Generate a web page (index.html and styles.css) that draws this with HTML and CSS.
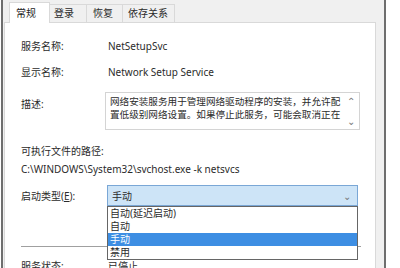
FILE: index.html
```html
<!DOCTYPE html>
<html lang="zh-cn">
<head>
    <meta charset="UTF-8">
    <title>NetSetupSvc 的属性</title>
    <link rel="stylesheet" href="styles.css">
</head>
<body>
    <div class="window">
        <!-- 选项卡 -->
        <div class="tabs">
            <div class="tab active">常规</div>
            <div class="tab">登录</div>
            <div class="tab">恢复</div>
            <div class="tab">依存关系</div>
        </div>

        <!-- 常规页 -->
        <div class="panel">
            <div class="row row-name">
                <div class="label">服务名称:</div>
                <div class="value">NetSetupSvc</div>
            </div>
            <div class="row row-display">
                <div class="label">显示名称:</div>
                <div class="value">Network Setup Service</div>
            </div>
            <div class="row row-desc">
                <div class="label">描述:</div>
                <div class="desc-box">
                    <div class="desc-text">网络安装服务用于管理网络驱动程序的安装，并允许配<br>置低级别网络设置。如果停止此服务，可能会取消正在</div>
                    <div class="desc-scroll">
                        <span class="chev">&#8963;</span>
                        <span class="chev">&#8964;</span>
                    </div>
                </div>
            </div>
            <div class="path-label">可执行文件的路径:</div>
            <div class="path-value">C:\WINDOWS\System32\svchost.exe -k netsvcs</div>
            <div class="row row-start">
                <div class="label">启动类型(<u>E</u>):</div>
                <div class="select">
                    <div class="select-box">
                        <span>手动</span>
                        <span class="select-arrow">&#8964;</span>
                    </div>
                    <ul class="options">
                        <li>自动(延迟启动)</li>
                        <li>自动</li>
                        <li class="selected">手动</li>
                        <li>禁用</li>
                    </ul>
                </div>
            </div>
            <div class="separator"></div>
            <div class="row row-status">
                <div class="label">服务状态:</div>
                <div class="value">已停止</div>
            </div>
        </div>
    </div>
</body>
</html>
```

FILE: styles.css
```css
body {
    margin: 0;
    background-color: #ffffff;
    font-family: "Noto Sans", "Noto Sans CJK SC", sans-serif;
    font-size: 10px;
    color: #2b2b2b;
    overflow: hidden;
}

.window {
    margin-left: 1px;
    width: 385px;
    height: 268px;
    overflow: hidden;
    box-sizing: border-box;
    border-left: 2px solid #6e6e6e;
    border-right: 2px solid #6e6e6e;
    background-color: #f0f0f0;
}

.tabs {
    display: flex;
    align-items: flex-end;
    height: 22px;
    padding-left: 6px;
    position: relative;
    z-index: 1;
}

.tab {
    height: 18px;
    box-sizing: border-box;
    line-height: 17px;
    padding: 0;
    white-space: nowrap;
    border: 1px solid #d9d9d9;
    border-bottom: none;
    border-left: none;
    background-color: #f0f0f0;
}

.tab:nth-child(2) {
    width: 37px;
    padding-left: 4px;
}

.tab:nth-child(3) {
    width: 36px;
    padding-left: 6px;
}

.tab:nth-child(4) {
    width: 52px;
    padding-left: 5px;
}

.tab.active {
    width: 41px;
    height: 21px;
    margin-bottom: -1px;
    line-height: 20px;
    padding-left: 6px;
    border-left: 1px solid #d9d9d9;
    background-color: #ffffff;
    color: #222;
}

.panel {
    margin-left: 1px;
    width: 372px;
    height: 246px;
    overflow: hidden;
    box-sizing: border-box;
    border: 1px solid #d9d9d9;
    border-bottom: none;
    background-color: #ffffff;
    padding: 16px 0 0 16px;
}

.row {
    display: flex;
    align-items: center;
    line-height: 14px;
}

.label {
    width: 86px;
    flex-shrink: 0;
}

.value {
    padding-left: 1px;
}

.row-display {
    margin-top: 12px;
}

.row-desc {
    margin-top: 13px;
    align-items: flex-start;
}

.row-desc .label {
    padding-top: 5px;
}

.desc-box {
    display: flex;
    margin-left: -2px;
    width: 255px;
    height: 38px;
    box-sizing: border-box;
    border: 1px solid #d4d4d4;
}

.desc-text {
    flex: 1;
    padding: 2px 0 0 4px;
    font-size: 9.6px;
    line-height: 13px;
    white-space: nowrap;
    overflow: hidden;
}

.desc-scroll {
    width: 17px;
    display: flex;
    flex-direction: column;
    justify-content: space-between;
    align-items: center;
    color: #777;
    font-size: 10px;
    padding: 3px 0;
    line-height: 10px;
}

.path-label {
    margin-top: 14px;
    line-height: 14px;
}

.path-value {
    margin-top: 4px;
    line-height: 14px;
}

.row-start {
    margin-top: 9px;
}

.select {
    position: relative;
    width: 251px;
}

.select-box {
    display: flex;
    justify-content: space-between;
    align-items: center;
    height: 21px;
    box-sizing: border-box;
    padding: 0 6px 0 4px;
    border: 1px solid #7aa7d6;
    background-color: #cde4f7;
}

.select-arrow {
    color: #777;
}

.options {
    position: absolute;
    top: 21px;
    left: 0;
    right: 0;
    margin: 0;
    padding: 0;
    list-style: none;
    border: 1px solid #666;
    background-color: #ffffff;
    z-index: 2;
}

.options li {
    height: 13px;
    line-height: 13px;
    padding-left: 2px;
}

.options li.selected {
    background-color: #3d8ee3;
    color: #ffffff;
}

.separator {
    margin-top: 40px;
    width: 340px;
    height: 1px;
    background-color: #a0a0a0;
}

.row-status {
    margin-top: 12px;
}
```
